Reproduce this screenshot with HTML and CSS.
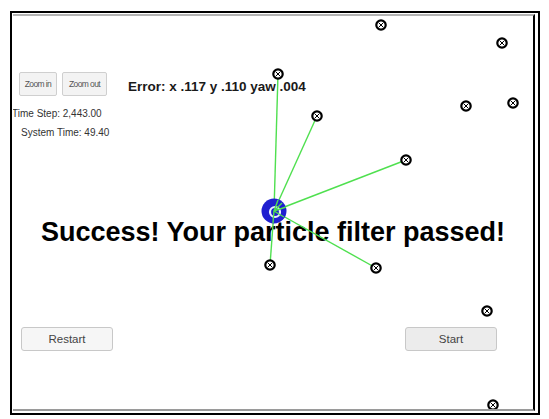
FILE: index.html
```html
<!DOCTYPE html>
<html>
<head>
<meta charset="utf-8">
<link rel="stylesheet" href="styles.css">
</head>
<body>
<div class="window">
  <div class="inner">
    <div class="top-row">
      <button class="zoom-btn zoom-in">Zoom in</button>
      <button class="zoom-btn zoom-out">Zoom out</button>
      <div class="error">Error: x .117 y .110 yaw .004</div>
    </div>
    <div class="time-step">Time Step: 2,443.00</div>
    <div class="system-time">System Time: 49.40</div>
    <h1 class="success">Success! Your particle filter passed!</h1>
    <div class="bottom-row">
      <button class="big-btn restart">Restart</button>
      <button class="big-btn start">Start</button>
    </div>
    <svg class="scene" viewBox="13 16 520 393" width="520" height="393">
      <defs>
        <g id="lm">
          <circle r="4.7" fill="#fff" stroke="#000" stroke-width="2.2"/>
          <path d="M-2.3 -2.3 L2.3 2.3 M2.3 -2.3 L-2.3 2.3" stroke="#000" stroke-width="1"/>
        </g>
      </defs>
      <g class="rays" stroke="#4fe04f" stroke-width="1.4">
        <line x1="274" y1="211" x2="278" y2="74"/>
        <line x1="274" y1="211" x2="317" y2="116"/>
        <line x1="274" y1="211" x2="406" y2="160"/>
        <line x1="274" y1="211" x2="270" y2="265"/>
        <line x1="274" y1="211" x2="376" y2="268"/>
      </g>
      <circle cx="274" cy="211" r="12.5" fill="#1f1fd0"/>
      <circle cx="275" cy="212" r="5" fill="none" stroke="#e8f0ff" stroke-width="2.2"/>
      <g class="rays" stroke="#4fe04f" stroke-width="1.4">
        <line x1="274" y1="211" x2="278" y2="200"/>
        <line x1="274" y1="211" x2="282" y2="203"/>
        <line x1="274" y1="211" x2="286" y2="207"/>
        <line x1="274" y1="211" x2="273" y2="223"/>
        <line x1="274" y1="211" x2="284" y2="217"/>
      </g>
      <use href="#lm" x="381" y="25"/>
      <use href="#lm" x="502" y="43"/>
      <use href="#lm" x="278" y="74"/>
      <use href="#lm" x="317" y="116"/>
      <use href="#lm" x="466" y="106"/>
      <use href="#lm" x="513" y="103"/>
      <use href="#lm" x="406" y="160"/>
      <use href="#lm" x="270" y="265"/>
      <use href="#lm" x="376" y="268"/>
      <use href="#lm" x="487" y="311"/>
      <use href="#lm" x="493" y="405"/>
    </svg>
  </div>
</div>
</body>
</html>
```
FILE: styles.css
```css
* { box-sizing: border-box; }
html, body { margin: 0; padding: 0; background: #fff; }
body {
  font-family: "Liberation Sans", Arial, Helvetica, sans-serif;
  width: 549px;
  height: 419px;
  overflow: hidden;
}
.window {
  margin: 11px 0 0 10px;
  width: 530px;
  height: 404px;
  border: 2px solid #000;
}
.inner {
  position: relative;
  margin: 1px 0 0 1px;
  width: 522px;
  height: 397px;
  border-top: 2px solid #b4b4b4;
  border-right: 2px solid #000;
  border-bottom: 2px solid #9a9a9a;
  overflow: hidden;
}
.top-row {
  display: flex;
  align-items: center;
  margin-top: 56px;
  padding-left: 6px;
  height: 24px;
}
.zoom-btn {
  height: 24px;
  padding: 0;
  margin: 0;
  background: #f3f3f3;
  border: 1px solid #cfcfcf;
  border-radius: 2px;
  font-family: "Liberation Sans", Arial, sans-serif;
  font-size: 8.5px;
  letter-spacing: -0.6px;
  color: #555;
}
.zoom-in { width: 38px; }
.zoom-out { width: 45px; margin-left: 5px; }
.error {
  margin-left: 21px;
  font-size: 13.5px;
  font-weight: bold;
  color: #1a1a1a;
  margin-top: 4px;
}
.time-step {
  margin-top: 12px;
  font-size: 10px;
  line-height: 12px;
  color: #333;
  margin-left: -1px;
}
.system-time {
  margin-top: 7px;
  padding-left: 8px;
  font-size: 10px;
  line-height: 12px;
  color: #333;
}
.success {
  margin: 78px 0 0 0;
  font-size: 27px;
  line-height: 30px;
  font-weight: bold;
  text-align: center;
  color: #000;
}
.bottom-row {
  display: flex;
  justify-content: space-between;
  margin-top: 80px;
  padding: 0 36px 0 8px;
}
.big-btn {
  width: 92px;
  height: 24px;
  padding: 0;
  border: 1px solid #c8c8c8;
  border-radius: 3px;
  font-family: "Liberation Sans", Arial, sans-serif;
  font-size: 11.5px;
  color: #444;
}
.restart { background: #f6f6f6; }
.start { background: #ececec; }
.scene {
  position: absolute;
  left: 0;
  top: 0;
  pointer-events: none;
}
```
